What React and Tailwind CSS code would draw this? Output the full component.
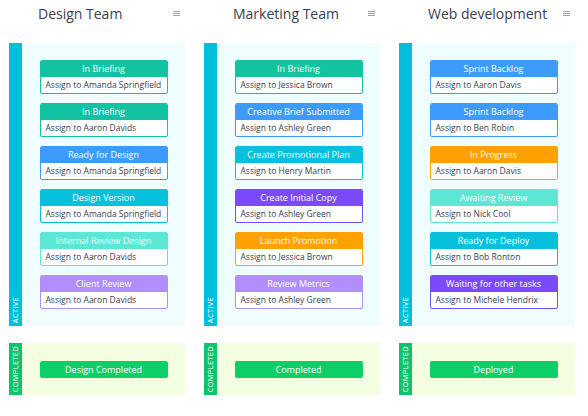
import React from 'react';

const colors = {
  teal: { bg: 'bg-[#12c3a1]', border: 'border-[#12c3a1]' },
  blue: { bg: 'bg-[#3d9bfd]', border: 'border-[#3d9bfd]' },
  cyan: { bg: 'bg-[#08bfdc]', border: 'border-[#08bfdc]' },
  mint: { bg: 'bg-[#5ce6d4]', border: 'border-[#5ce6d4]' },
  lavender: { bg: 'bg-[#b18efc]', border: 'border-[#b18efc]' },
  purple: { bg: 'bg-[#7b4bfb]', border: 'border-[#7b4bfb]' },
  orange: { bg: 'bg-[#ffa101]', border: 'border-[#ffa101]' },
};

const columns = [
  {
    title: 'Design Team',
    done: 'Design Completed',
    cards: [
      ['In Briefing', 'Assign to Amanda Springfield', 'teal'],
      ['In Briefing', 'Assign to Aaron Davids', 'teal'],
      ['Ready for Design', 'Assign to Amanda Springfield', 'blue'],
      ['Design Version', 'Assign to Amanda Springfield', 'cyan'],
      ['Internal Review Design', 'Assign to Aaron Davids', 'mint'],
      ['Client Review', 'Assign to Aaron Davids', 'lavender'],
    ],
  },
  {
    title: 'Marketing Team',
    done: 'Completed',
    cards: [
      ['In Briefing', 'Assign to Jessica Brown', 'teal'],
      ['Creative Brief Submitted', 'Assign to Ashley Green', 'blue'],
      ['Create Promotional Plan', 'Assign to Henry Martin', 'cyan'],
      ['Create Initial Copy', 'Assign to Ashley Green', 'purple'],
      ['Launch Promotion', 'Assign to Jessica Brown', 'orange'],
      ['Review Metrics', 'Assign to Ashley Green', 'lavender'],
    ],
  },
  {
    title: 'Web development',
    done: 'Deployed',
    cards: [
      ['Sprint Backlog', 'Assign to Aaron Davis', 'blue'],
      ['Sprint Backlog', 'Assign to Ben Robin', 'blue'],
      ['In Progress', 'Assign to Aaron Davis', 'orange'],
      ['Awaiting Review', 'Assign to Nick Cool', 'mint'],
      ['Ready for Deploy', 'Assign to Bob Ronton', 'cyan'],
      ['Waiting for other tasks', 'Assign to Michele Hendrix', 'purple'],
    ],
  },
];

const Card = ({ title, assignee, color }) => {
  const c = colors[color];
  return (
    <div className={`w-[128px] border ${c.border} rounded-[2px] bg-white overflow-hidden`}>
      <div className={`h-[16px] ${c.bg} text-white text-[9px] leading-[16px] text-center whitespace-nowrap`}>{title}</div>
      <div className="h-[16px] px-[5px] text-[8.5px] leading-[16px] text-[#3b4150] whitespace-nowrap">{assignee}</div>
    </div>
  );
};

const SideLabel = ({ text, className }) => (
  <div className={`w-[13px] shrink-0 flex flex-col items-center ${className}`}>
    <span className="[writing-mode:vertical-rl] rotate-180 text-white text-[7.5px] leading-[13px] tracking-[0.3px] whitespace-nowrap">
      {text}
    </span>
  </div>
);

const Column = ({ column }) => (
  <div className="w-[176px] shrink-0 flex flex-col">
    <div className="h-[27px] flex items-center justify-between pl-[29px] pr-[5px] mb-[16px]">
      <span className="text-[14px] text-[#3a4150]">{column.title}</span>
      <div className="flex flex-col gap-[1px]">
        <span className="block w-[7px] h-[1px] bg-[#9aa5b8]" />
        <span className="block w-[7px] h-[1px] bg-[#9aa5b8]" />
        <span className="block w-[7px] h-[1px] bg-[#9aa5b8]" />
      </div>
    </div>

    <div className="flex h-[283px]">
      <SideLabel text="ACTIVE" className="bg-[#00bfdc] justify-end pb-[3px]" />
      <div className="flex-1 bg-[#f0fdff] py-[17px] flex flex-col items-center gap-[9px]">
        {column.cards.map(([title, assignee, color], i) => (
          <Card key={i} title={title} assignee={assignee} color={color} />
        ))}
      </div>
    </div>

    <div className="flex h-[52px] mt-[17px]">
      <SideLabel text="COMPLETED" className="bg-[#0cc46c] justify-center" />
      <div className="flex-1 bg-[#f4fee0] flex items-center justify-center">
        <div className="w-[128px] h-[17px] rounded-[2px] bg-[#0ccf67] text-white text-[9px] leading-[17px] text-center">
          {column.done}
        </div>
      </div>
    </div>
  </div>
);

export default function App() {
  return (
    <div className="w-[588px] h-[416px] bg-white font-['Open_Sans',sans-serif] flex gap-[19px] pl-[9px]">
      {columns.map((col) => (
        <Column key={col.title} column={col} />
      ))}
    </div>
  );
}
